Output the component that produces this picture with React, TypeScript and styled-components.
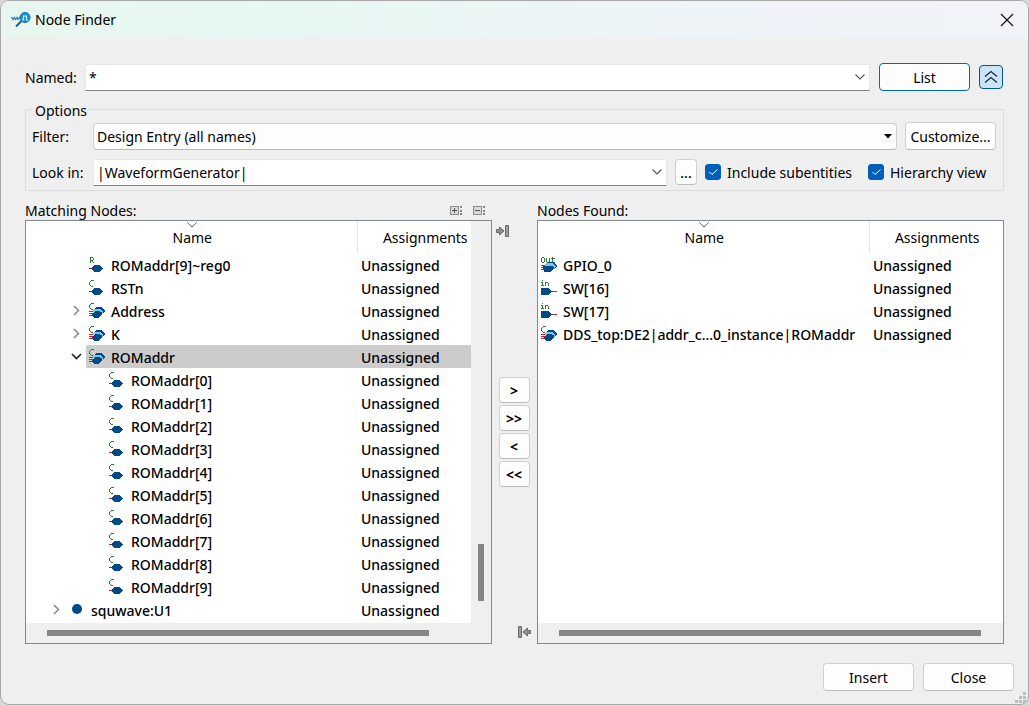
import React, { useState } from "react";
import styled, { createGlobalStyle } from "styled-components";

const NAVY = "#004a86";
const LIGHT_BLUE = "#7cc4f4";
const GREEN = "#2e7d32";
const RED = "#e0182d";

const GlobalStyle = createGlobalStyle`
  * { box-sizing: border-box; }
  body {
    margin: 0;
    background: #d9d9d9;
    color: #000;
    font: 14px/20px "Noto Sans", "Open Sans", sans-serif;
  }
  button, input, select { font: inherit; color: inherit; }
`;

const Dialog = styled.main`
  position: relative;
  display: flex;
  flex-direction: column;
  min-height: calc(100vh - 1px);
  margin: 0 0 1px;
  overflow: hidden;
  background: #efefef;
  border: 1px solid #a8a8a8;
  border-radius: 9px;
`;

const TitleBar = styled.header`
  display: flex;
  align-items: center;
  gap: 4px;
  height: 37px;
  padding: 0 14px 0 10px;
  background: linear-gradient(90deg, #e9f6f0 0%, #e5f8f3 25%, #ebf5f5 50%, #eff3f9 75%, #f0f3f8 100%);
`;

const Title = styled.h1`
  flex: 1;
  margin: 0;
  font-size: 14px;
  font-weight: 400;
`;

const BareButton = styled.button`
  display: inline-flex;
  align-items: center;
  justify-content: center;
  padding: 0;
  background: none;
  border: 0;
`;

const Content = styled.div`
  display: flex;
  flex: 1;
  flex-direction: column;
  padding: 25px 24px 0;
`;

const SearchRow = styled.div`
  display: flex;
  align-items: center;
  gap: 9px;
  padding-right: 1px;
`;

const FieldLabel = styled.label<{ $width: number }>`
  flex: none;
  width: ${(p) => p.$width}px;
  padding-top: 2px;
`;

const Field = styled.div`
  display: flex;
  flex: 1;
  align-items: center;
  min-width: 0;
`;

const ComboFrame = styled.div`
  display: flex;
  flex: 1;
  height: 27px;
  min-width: 0;
  background: #fff;
  border: 1px solid #e6e6e6;
  border-bottom-color: #858585;
`;

const ComboInput = styled.input`
  flex: 1;
  min-width: 0;
  padding: 2px 3px 0;
  background: none;
  border: 0;
  outline: 0;
`;

const ComboArrow = styled(BareButton)`
  width: 18px;
`;

const PushButton = styled.button<{ $width: number; $primary?: boolean }>`
  flex: none;
  width: ${(p) => p.$width}px;
  height: 28px;
  padding: 2px 0 0;
  background: #fdfdfd;
  border: 1px solid ${(p) => (p.$primary ? "#0067c0" : "#d0d0d0")};
  border-bottom-color: ${(p) => (p.$primary ? "#0067c0" : "#bcbcbc")};
  border-radius: 4px;
`;

const MoreButton = styled(PushButton)`
  height: 26px;
  font-weight: 500;
`;

const CollapseButton = styled(BareButton)`
  width: 24px;
  height: 24px;
  background: #cce4f7;
  border: 1px solid #005499;
  border-radius: 4px;
`;

const Options = styled.fieldset`
  display: flex;
  flex-direction: column;
  gap: 8px;
  min-width: 0;
  margin: 8px 0 0;
  padding: 3px 7px 4px 6px;
  border: 1px solid #dcdcdc;
`;

const Legend = styled.legend`
  margin-left: 1px;
  padding: 4px 2px 0;
  line-height: 16px;
`;

const OptionRow = styled.div`
  display: flex;
  align-items: center;
  gap: 8px;
  height: 28px;
`;

const SelectFrame = styled.div`
  position: relative;
  flex: 1;
  height: 27px;
`;

const Select = styled.select`
  width: 100%;
  height: 100%;
  padding: 2px 24px 0 3px;
  appearance: none;
  background: #fdfdfd;
  border: 1px solid #cfcfcf;
  border-bottom-color: #b8b8b8;
  border-radius: 4px;
`;

const SelectArrow = styled.svg`
  position: absolute;
  top: 11px;
  right: 5px;
  pointer-events: none;
`;

const CheckLabel = styled.label<{ $width: number }>`
  display: inline-flex;
  position: relative;
  flex: none;
  align-items: center;
  gap: 6px;
  width: ${(p) => p.$width}px;
`;

const CheckBox = styled.input`
  width: 16px;
  height: 16px;
  margin: 0;
  appearance: none;
  background: #fff;
  border: 1px solid #8a8a8a;
  border-radius: 3px;

  &:checked {
    background: #005fb8;
    border-color: #005fb8;
  }
`;

const CheckMark = styled.svg`
  position: absolute;
  left: 4px;
  pointer-events: none;
`;

const Text = styled.span`
  padding-top: 2px;
`;

const Panes = styled.div`
  display: flex;
  flex: 1;
  margin-top: 9px;
`;

const Pane = styled.section`
  display: flex;
  flex: 1;
  flex-direction: column;
  min-width: 0;
`;

const PaneHeader = styled.div`
  display: flex;
  align-items: center;
  height: 20px;
  padding-top: 2px;
`;

const PaneTitle = styled.h2`
  flex: 1;
  margin: 0;
  font-size: 14px;
  font-weight: 400;
`;

const PaneTools = styled.div`
  display: flex;
  gap: 10px;
  padding-right: 6px;
`;

const ListFrame = styled.div`
  display: flex;
  flex: 1;
  flex-direction: column;
  background: #fff;
  border: 1px solid #828790;
`;

const Viewport = styled.div`
  position: relative;
  flex: 1;
`;

const NodeTable = styled.table`
  width: 100%;
  table-layout: fixed;
  border-collapse: collapse;
`;

const HeadCell = styled.th<{ $width?: number }>`
  position: relative;
  width: ${(p) => (p.$width ? `${p.$width}px` : "auto")};
  height: 32px;
  padding: 2px 0 0 2px;
  font-weight: 400;

  & + & { border-left: 1px solid #e5e5e5; }
`;

const SortMark = styled.svg`
  position: absolute;
  top: 1px;
  left: calc(50% - 4px);
`;

const NameCell = styled.td`
  height: 23px;
  padding: 0;
`;

const AssignCell = styled.td<{ $selected?: boolean }>`
  padding: 2px 0 0 4px;
  font-weight: 500;
  background: ${(p) => (p.$selected ? "#cccccc" : "transparent")};
`;

const Branch = styled.div<{ $level: number }>`
  display: flex;
  height: 23px;
  padding-left: ${(p) => p.$level * 20}px;
`;

const Expander = styled(BareButton)`
  flex: none;
  width: 20px;
`;

const Item = styled.div<{ $selected?: boolean }>`
  display: flex;
  flex: 1;
  align-items: center;
  gap: 6px;
  min-width: 0;
  padding-left: 3px;
  font-weight: 500;
  white-space: nowrap;
  background: ${(p) => (p.$selected ? "#cccccc" : "transparent")};
  border-radius: 2px 0 0 2px;

  svg { flex: none; }
`;

const VerticalBar = styled.div`
  display: flex;
  position: absolute;
  top: 0;
  right: 0;
  bottom: 0;
  flex-direction: column;
  align-items: center;
  width: 20px;
  padding-bottom: 22px;
  background: #efefef;
`;

const VerticalThumb = styled.div`
  width: 6px;
  height: 57px;
  margin-top: auto;
  background: #868686;
`;

const HorizontalBar = styled.div`
  display: flex;
  align-items: center;
  height: 20px;
  padding-left: 21px;
  background: #efefef;
`;

const HorizontalThumb = styled.div<{ $share: number }>`
  width: ${(p) => p.$share}%;
  height: 6px;
  background: #868686;
`;

const Transfer = styled.div`
  display: flex;
  flex-direction: column;
  justify-content: space-between;
  width: 45px;
  padding: 25px 6px 5px 4px;
`;

const TransferButtons = styled.div`
  display: flex;
  flex-direction: column;
  align-items: center;
  gap: 2px;
  margin-left: 1px;
`;

const TransferButton = styled(PushButton)`
  height: 26px;
  font-weight: 700;
`;

const DockButton = styled(BareButton)<{ $end?: boolean }>`
  align-self: ${(p) => (p.$end ? "flex-end" : "flex-start")};
`;

const Footer = styled.footer`
  display: flex;
  justify-content: flex-end;
  gap: 9px;
  padding: 19px 14px 13px;
`;

const Grip = styled.svg`
  position: absolute;
  right: 2px;
  bottom: 1px;
`;

type IconKind = "register" | "comb" | "combGroup" | "outGroup" | "input" | "entity";

function LetterC() {
  return <path d="M2 .5h3M1.500 1v1M.5 2v3M1.500 5v1M2 6.500h2" stroke={GREEN} fill="none" />;
}

function WireLines() {
  return <path d="M0 8.500h4M0 10.500h4M0 12.500h4" stroke={RED} />;
}

function NodeIcon({ kind }: { kind: IconKind }) {
  return (
    <svg width="16" height="16" viewBox="0 0 16 16" shapeRendering="crispEdges" aria-hidden="true">
      {kind === "register" && (
        <path d="M1.500 0v6M2 .5h2M2 3.500h2M4.500 1v2M3.500 4v1M4.500 5v1" stroke={GREEN} fill="none" />
      )}
      {kind === "comb" && <LetterC />}
      {(kind === "register" || kind === "comb") && (
        <>
          <path d="M0 11.500h3" stroke={RED} />
          <path d="M2 11h1v-1h1v-1h1v-1h6v1h1v1h1v1h1v1h-1v1h-1v1h-1v1H5v-1H4v-1H3v-1H2z" fill={NAVY} />
        </>
      )}
      {kind === "combGroup" && (
        <>
          <LetterC />
          <WireLines />
          <path d="M6 5h1V4h6v1h1v1h1v1h1v2h-1v1h-1v1H8z" fill={NAVY} />
          <path d="M4 8V7h1V6h7v1h1v1h1v3h-1V9H4z" fill={LIGHT_BLUE} />
          <path d="M3 11h1v-1h1V9h1V8h5v1h1v1h1v2h-1v1h-1v1h-1v1H5v-1H4v-1H3z" fill={NAVY} />
        </>
      )}
      {kind === "outGroup" && (
        <>
          <path d="M.5 1v4M1 .5h2M1 5.500h2M3.500 1v4M5.500 1v4M6 5.500h2M8.500 1v4M11.500 0v5M10 1.500h4M12 5.500h2" stroke={GREEN} fill="none" />
          <WireLines />
          <path d="M6 6V5h7v1h1v1h1v1h1v2h-1v1h-1v1h-3z" fill={NAVY} />
          <path d="M4 8V7h1V6h7v1h1v1h1v1h1v1h-1v2h-1v-2h-1V9H4z" fill={LIGHT_BLUE} />
          <path d="M2 9h8v1h1v1h1v2h-1v1h-1v1H3v-3H2z" fill={NAVY} />
        </>
      )}
      {kind === "input" && (
        <>
          <path d="M1.500 0v1M0 2.500h1M1.500 2v4M0 5.500h3M4.500 2v4M5 2.500h2M7.500 3v3" stroke={GREEN} fill="none" />
          <path d="M0 8h8v1h1v1h1v1h2v1h-2v1H9v1H8v1H0z" fill={NAVY} />
          <path d="M12 11.500h4" stroke={RED} />
        </>
      )}
      {kind === "entity" && <circle cx="8" cy="7" r="5" fill={NAVY} shapeRendering="auto" />}
    </svg>
  );
}

function Chevron({ dir, color }: { dir: "down" | "right"; color: string }) {
  return dir === "down" ? (
    <svg width="10" height="6" viewBox="0 0 10 6" aria-hidden="true">
      <path d="M.5 .5L5 5 9.500 .5" fill="none" stroke={color} strokeWidth="1.100" />
    </svg>
  ) : (
    <svg width="7" height="11" viewBox="0 0 7 11" aria-hidden="true">
      <path d="M1 1l4.500 4.500L1 10" fill="none" stroke={color} strokeWidth="1.600" />
    </svg>
  );
}

function AppIcon() {
  return (
    <svg width="20" height="16" viewBox="0 0 20 16" aria-hidden="true">
      <path d="M0 5.500h1l1 2 1.500-2 1 2 1.500-2 1 2 1.500-2h2" fill="none" stroke="#2f7fa8" strokeWidth="1.200" />
      <path d="M10.500 9L5 14.500" stroke="#1f5c8b" strokeWidth="2" />
      <circle cx="14" cy="5.500" r="5" fill="#0a94d8" stroke="#1c6ea5" />
      <path d="M11 8h1.500V4h3v4H17" fill="none" stroke="#d8f2ff" strokeWidth="1.200" />
    </svg>
  );
}

function TreeToolIcon({ expand }: { expand: boolean }) {
  return (
    <svg width="13" height="10" viewBox="0 0 13 10" shapeRendering="crispEdges" aria-hidden="true">
      <path d="M.5 .5h8v8h-8z" fill="#d9dbd6" stroke="#8b8d88" />
      <path d={expand ? "M2 4.500h5M4.500 2v5" : "M2 4.500h5"} stroke="#555753" />
      <path d="M10 0h2v2h-2zM10 4h2v2h-2zM10 7h2v2h-2z" fill="#858782" />
    </svg>
  );
}

function DockIcon({ flip }: { flip?: boolean }) {
  return (
    <svg width="14" height="13" viewBox="0 0 14 13" aria-hidden="true">
      <g transform={flip ? "translate(14 0) scale(-1 1)" : undefined}>
        <path d="M.5 4.500h3V2l4.500 4-4.500 4V7.500h-3z" fill="#909090" stroke="#686868" />
        <path d="M9.500 .5h3v11h-3z" fill="#a0a0a0" stroke="#686868" />
      </g>
    </svg>
  );
}

interface NodeRow {
  name: string;
  icon: IconKind;
  level?: number;
  branch?: "open" | "closed";
  selected?: boolean;
}

const matching: NodeRow[] = [
  { name: "ROMaddr[9]~reg0", icon: "register", level: 2 },
  { name: "RSTn", icon: "comb", level: 2 },
  { name: "Address", icon: "combGroup", level: 2, branch: "closed" },
  { name: "K", icon: "combGroup", level: 2, branch: "closed" },
  { name: "ROMaddr", icon: "combGroup", level: 2, branch: "open", selected: true },
  ...Array.from({ length: 10 }, (_, i): NodeRow => ({ name: `ROMaddr[${i}]`, icon: "comb", level: 3 })),
  { name: "squwave:U1", icon: "entity", level: 1, branch: "closed" },
];

const found: NodeRow[] = [
  { name: "GPIO_0", icon: "outGroup" },
  { name: "SW[16]", icon: "input" },
  { name: "SW[17]", icon: "input" },
  { name: "DDS_top:DE2|addr_c...0_instance|ROMaddr", icon: "combGroup" },
];

function NodeList({ rows, share, scrollable }: { rows: NodeRow[]; share: number; scrollable?: boolean }) {
  return (
    <ListFrame>
      <Viewport>
        <NodeTable>
          <thead>
            <tr>
              <HeadCell>
                <SortMark width="10" height="6" viewBox="0 0 10 6" aria-hidden="true">
                  <path d="M.5 .5L5 5 9.500 .5" fill="none" stroke="#666" />
                </SortMark>
                Name
              </HeadCell>
              <HeadCell $width={134}>Assignments</HeadCell>
            </tr>
          </thead>
          <tbody>
            {rows.map((row) => (
              <tr key={row.name}>
                <NameCell>
                  <Branch $level={row.level ?? 0}>
                    {row.level !== undefined &&
                      (row.branch ? (
                        <Expander type="button" aria-label={`Toggle ${row.name}`} aria-expanded={row.branch === "open"}>
                          {row.branch === "open" ? (
                            <svg width="11" height="7" viewBox="0 0 11 7" aria-hidden="true">
                              <path d="M1 1l4.500 4.500L10 1" fill="none" stroke="#222" strokeWidth="1.600" />
                            </svg>
                          ) : (
                            <Chevron dir="right" color="#8c8c8c" />
                          )}
                        </Expander>
                      ) : (
                        <Expander as="span" />
                      ))}
                    <Item $selected={row.selected}>
                      <NodeIcon kind={row.icon} />
                      <Text>{row.name}</Text>
                    </Item>
                  </Branch>
                </NameCell>
                <AssignCell $selected={row.selected}>Unassigned</AssignCell>
              </tr>
            ))}
          </tbody>
        </NodeTable>
        {scrollable && (
          <VerticalBar>
            <VerticalThumb />
          </VerticalBar>
        )}
      </Viewport>
      <HorizontalBar>
        <HorizontalThumb $share={share} />
      </HorizontalBar>
    </ListFrame>
  );
}

function Combo({ id, initial }: { id: string; initial: string }) {
  const [value, setValue] = useState(initial);
  return (
    <ComboFrame>
      <ComboInput id={id} value={value} onChange={(e) => setValue(e.target.value)} />
      <ComboArrow type="button" aria-label="Show choices">
        <Chevron dir="down" color="#555" />
      </ComboArrow>
    </ComboFrame>
  );
}

function Check({ label, width }: { label: string; width: number }) {
  return (
    <CheckLabel $width={width}>
      <CheckBox type="checkbox" defaultChecked />
      <CheckMark width="9" height="7" viewBox="0 0 9 7" aria-hidden="true">
        <path d="M.5 3L3 5.500 8.500 .5" fill="none" stroke="#fff" />
      </CheckMark>
      <Text>{label}</Text>
    </CheckLabel>
  );
}

export default function App() {
  return (
    <>
      <GlobalStyle />
      <Dialog>
        <TitleBar>
          <AppIcon />
          <Title>Node Finder</Title>
          <BareButton type="button" aria-label="Close window">
            <svg width="14" height="14" viewBox="0 0 14 14" aria-hidden="true">
              <path d="M1 1l12 12M13 1L1 13" stroke="#1a1a1a" strokeWidth="1.300" />
            </svg>
          </BareButton>
        </TitleBar>

        <Content>
          <SearchRow>
            <Field>
              <FieldLabel $width={60} htmlFor="named">Named:</FieldLabel>
              <Combo id="named" initial="*" />
            </Field>
            <PushButton type="button" $width={91} $primary>List</PushButton>
            <CollapseButton type="button" aria-label="Hide options">
              <svg width="14" height="14" viewBox="0 0 14 14" aria-hidden="true">
                <path d="M1 6.500l6-5 6 5M1 12.500l6-5 6 5" fill="none" stroke="#1b2a38" strokeWidth="1.300" />
              </svg>
            </CollapseButton>
          </SearchRow>

          <Options>
            <Legend>Options</Legend>
            <OptionRow>
              <Field>
                <FieldLabel $width={61} htmlFor="filter">Filter:</FieldLabel>
                <SelectFrame>
                  <Select id="filter" defaultValue="all">
                    <option value="all">Design Entry (all names)</option>
                  </Select>
                  <SelectArrow width="8" height="5" viewBox="0 0 8 5" aria-hidden="true">
                    <path d="M0 0h8L4 4.500z" fill="#000" />
                  </SelectArrow>
                </SelectFrame>
              </Field>
              <PushButton type="button" $width={91}>Customize...</PushButton>
            </OptionRow>
            <OptionRow>
              <Field>
                <FieldLabel $width={61} htmlFor="look-in">Look in:</FieldLabel>
                <Combo id="look-in" initial="|WaveformGenerator|" />
              </Field>
              <MoreButton type="button" $width={22}>...</MoreButton>
              <Check label="Include subentities" width={155} />
              <Check label="Hierarchy view" width={128} />
            </OptionRow>
          </Options>

          <Panes>
            <Pane>
              <PaneHeader>
                <PaneTitle>Matching Nodes:</PaneTitle>
                <PaneTools>
                  <BareButton type="button" aria-label="Expand all"><TreeToolIcon expand /></BareButton>
                  <BareButton type="button" aria-label="Collapse all"><TreeToolIcon expand={false} /></BareButton>
                </PaneTools>
              </PaneHeader>
              <NodeList rows={matching} share={86} scrollable />
            </Pane>
            <Transfer>
              <DockButton type="button" aria-label="Dock right"><DockIcon /></DockButton>
              <TransferButtons>
                {[">", ">>", "<", "<<"].map((t) => (
                  <TransferButton key={t} type="button" $width={31}>{t}</TransferButton>
                ))}
              </TransferButtons>
              <DockButton type="button" $end aria-label="Dock left"><DockIcon flip /></DockButton>
            </Transfer>
            <Pane>
              <PaneHeader>
                <PaneTitle>Nodes Found:</PaneTitle>
              </PaneHeader>
              <NodeList rows={found} share={95} />
            </Pane>
          </Panes>
        </Content>

        <Footer>
          <PushButton type="button" $width={91}>Insert</PushButton>
          <PushButton type="button" $width={91}>Close</PushButton>
        </Footer>
        <Grip width="11" height="11" viewBox="0 0 11 11" aria-hidden="true">
          <path d="M8 0h3v3H8zM4 4h3v3H4zM8 4h3v3H8zM0 8h3v3H0zM4 8h3v3H4zM8 8h3v3H8z" fill="#bdbdbd" />
        </Grip>
      </Dialog>
    </>
  );
}
